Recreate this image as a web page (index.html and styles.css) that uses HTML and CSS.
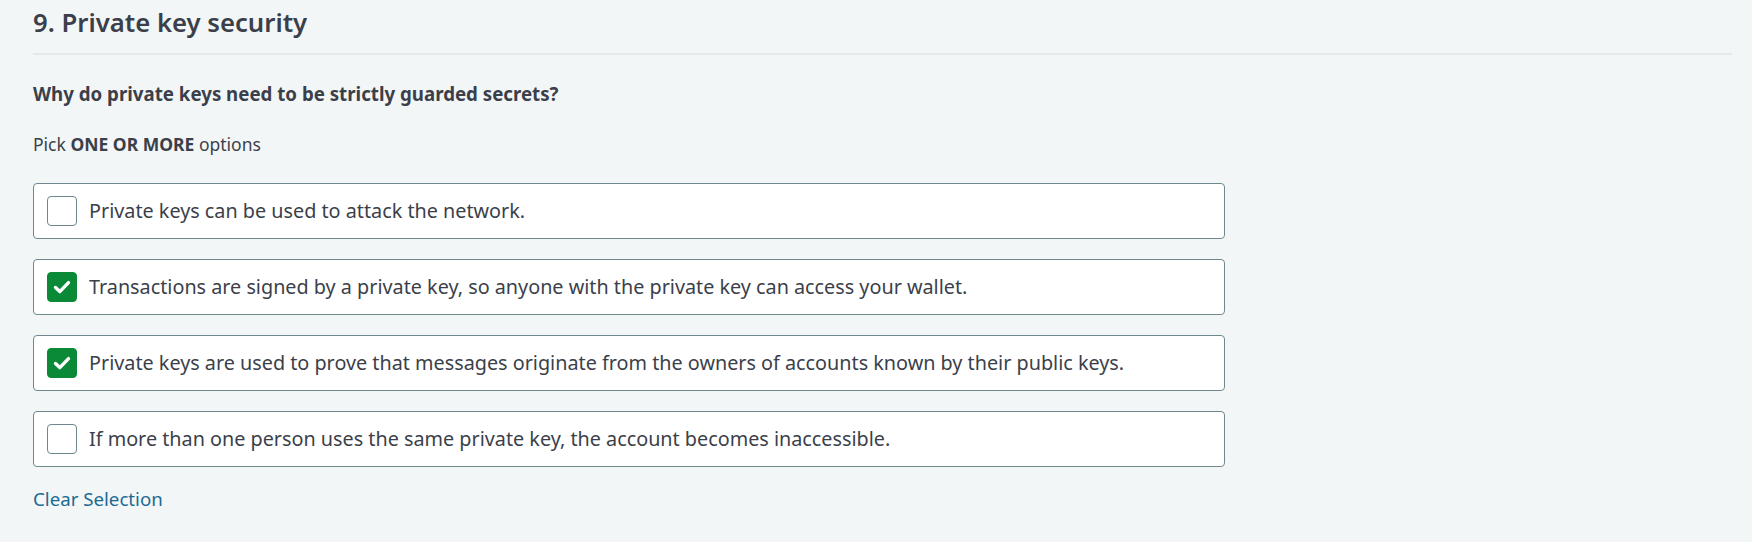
FILE: index.html
```html
<!DOCTYPE html>
<html lang="en">
<head>
<meta charset="utf-8">
<title>Private key security</title>
<link rel="stylesheet" href="styles.css">
</head>
<body>
<main class="page">
  <h2 class="title">9. Private key security</h2>
  <p class="question">Why do private keys need to be strictly guarded secrets?</p>
  <p class="hint">Pick <strong>ONE OR MORE</strong> options</p>
  <ul class="options">
    <li class="option">
      <span class="box"></span>
      <span class="label">Private keys can be used to attack the network.</span>
    </li>
    <li class="option">
      <span class="box checked"><svg viewBox="0 0 30 30" width="30" height="30"><path d="M8.5 15.5 L12.8 19.6 L21.5 10.6" fill="none" stroke="#fff" stroke-width="3.4" stroke-linecap="round" stroke-linejoin="round"/></svg></span>
      <span class="label">Transactions are signed by a private key, so anyone with the private key can access your wallet.</span>
    </li>
    <li class="option">
      <span class="box checked"><svg viewBox="0 0 30 30" width="30" height="30"><path d="M8.5 15.5 L12.8 19.6 L21.5 10.6" fill="none" stroke="#fff" stroke-width="3.4" stroke-linecap="round" stroke-linejoin="round"/></svg></span>
      <span class="label">Private keys are used to prove that messages originate from the owners of accounts known by their public keys.</span>
    </li>
    <li class="option">
      <span class="box"></span>
      <span class="label">If more than one person uses the same private key, the account becomes inaccessible.</span>
    </li>
  </ul>
  <a class="clear" href="#">Clear Selection</a>
</main>
</body>
</html>
```
FILE: styles.css
```css
html, body {
  margin: 0;
  padding: 0;
  background: #f3f6f7;
}
body {
  font-family: "Noto Sans", "Open Sans", sans-serif;
  color: #3b3f4a;
}
.page {
  padding: 0 20px 0 33px;
}
.title {
  margin: 0;
  padding-top: 4px;
  height: 55px;
  box-sizing: border-box;
  font-size: 25.7px;
  font-weight: 600;
  line-height: 38px;
  border-bottom: 2px solid #e3eaea;
  color: #3b3f4a;
}
.question {
  margin: 27px 0 0;
  font-size: 18.7px;
  font-weight: 700;
  line-height: 24px;
}
.hint {
  margin: 27px 0 0;
  font-size: 17.5px;
  line-height: 22px;
}
.hint strong {
  font-weight: 700;
}
.options {
  list-style: none;
  margin: 28px 0 0;
  padding: 0;
  width: 1192px;
  display: flex;
  flex-direction: column;
  gap: 20px;
}
.option {
  display: flex;
  align-items: center;
  gap: 12px;
  height: 56px;
  box-sizing: border-box;
  padding: 0 13px;
  background: #fff;
  border: 1px solid #6f878e;
  border-radius: 4px;
}
.box {
  flex: none;
  width: 30px;
  height: 30px;
  box-sizing: border-box;
  border: 1px solid #6f878e;
  border-radius: 4px;
  background: #fff;
}
.box.checked {
  background: #0a8a37;
  border-color: #0a8a37;
  display: flex;
}
.box.checked svg {
  margin: -1px;
}
.label {
  font-size: 19.8px;
  line-height: 24px;
  color: #3b3f4a;
}
.clear {
  display: inline-block;
  margin-top: 20px;
  font-size: 18.7px;
  line-height: 24px;
  color: #1b6a93;
  text-decoration: none;
}
```
